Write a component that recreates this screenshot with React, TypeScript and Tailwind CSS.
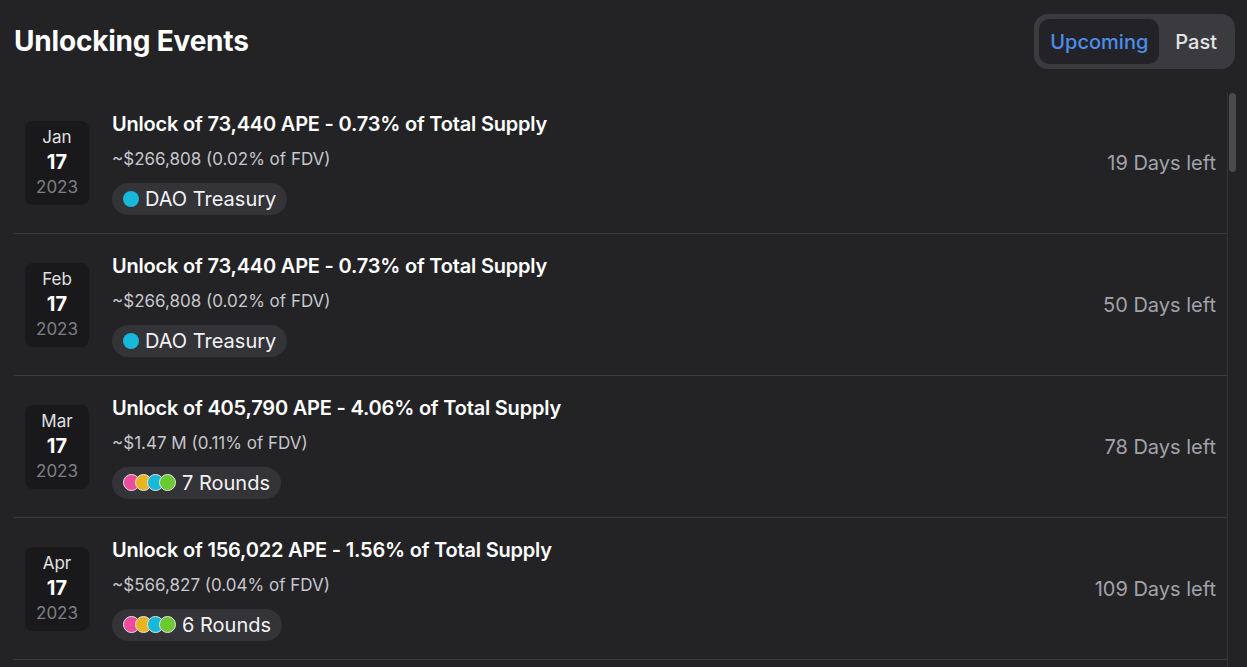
import React from 'react';

interface UnlockEvent {
  month: string;
  day: string;
  year: string;
  amount: string;
  pct: string;
  value: string;
  label: string;
  rounds: boolean;
  daysLeft: number;
}

const events: UnlockEvent[] = [
  { month: 'Jan', day: '17', year: '2023', amount: '73,440', pct: '0.73%', value: '~$266,808 (0.02% of FDV)', label: 'DAO Treasury', rounds: false, daysLeft: 19 },
  { month: 'Feb', day: '17', year: '2023', amount: '73,440', pct: '0.73%', value: '~$266,808 (0.02% of FDV)', label: 'DAO Treasury', rounds: false, daysLeft: 50 },
  { month: 'Mar', day: '17', year: '2023', amount: '405,790', pct: '4.06%', value: '~$1.47 M (0.11% of FDV)', label: '7 Rounds', rounds: true, daysLeft: 78 },
  { month: 'Apr', day: '17', year: '2023', amount: '156,022', pct: '1.56%', value: '~$566,827 (0.04% of FDV)', label: '6 Rounds', rounds: true, daysLeft: 109 },
];

const roundColors = ['bg-[#ec4c9c]', 'bg-[#eab320]', 'bg-[#17b8d8]', 'bg-[#6cc932]'];

function RoundDots() {
  return (
    <div className="flex">
      {roundColors.map((c, i) => (
        <span
          key={c}
          className={`w-[17px] h-[17px] rounded-full border border-[#e6e6ea] ${c} ${i > 0 ? '-ml-[5px]' : ''}`}
        />
      ))}
    </div>
  );
}

export default function App() {
  return (
    <div
      className="w-[1247px] h-[667px] overflow-hidden bg-[#232326] text-white"
      style={{ fontFamily: 'Inter, "Noto Sans", sans-serif' }}
    >
      <div className="h-[92px] flex items-start justify-between pl-[14px] pr-[12px]">
        <h1 className="mt-[23px] text-[28px] leading-[36px] font-bold tracking-[-0.2px]">Unlocking Events</h1>
        <div className="mt-[14px] flex items-center h-[55px] p-[5px] rounded-[14px] bg-[#3a3a3f]">
          <button type="button" className="h-[45px] px-[11px] rounded-[10px] bg-[#232327] text-[20px] font-medium text-[#4a8eea]">
            Upcoming
          </button>
          <button type="button" className="h-[45px] pl-[16px] pr-[13px] text-[20px] font-medium text-[#e4e4e8]">
            Past
          </button>
        </div>
      </div>

      <div className="flex pl-[14px] pr-[10px]">
        <div className="flex-1">
          {events.map((e, i) => (
            <div key={i} className="h-[142px] flex items-center border-b border-[#3b3b40]">
              <div className="ml-[11px] w-[64px] h-[84px] rounded-[8px] bg-[#19191b] flex flex-col items-center justify-center">
                <span className="text-[17px] leading-[25px] text-[#e0e0e4]">{e.month}</span>
                <span className="text-[20px] leading-[25px] font-bold">{e.day}</span>
                <span className="text-[17px] leading-[25px] text-[#7e7e84]">{e.year}</span>
              </div>
              <div className="ml-[23px] flex-1 flex flex-col items-start">
                <div className="text-[20px] leading-[26px] font-semibold tracking-[-0.2px]">
                  Unlock of {e.amount} APE - {e.pct} of Total Supply
                </div>
                <div className="mt-[11px] text-[17px] leading-[22px] text-[#c6c6cc]">{e.value}</div>
                <div className="mt-[13px] h-[32px] flex items-center gap-[6px] pl-[11px] pr-[11px] rounded-full bg-[#333338]">
                  {e.rounds ? <RoundDots /> : <span className="w-[16px] h-[16px] rounded-full bg-[#17b8d8]" />}
                  <span className="text-[20px] leading-none text-[#f2f2f5]">{e.label}</span>
                </div>
              </div>
              <div className="pr-[11px] text-[20px] text-[#a2a2a8]">{e.daysLeft} Days left</div>
            </div>
          ))}
        </div>
        <div className="w-[10px] h-[575px] border-l border-[#333337] flex justify-center">
          <div className="mt-[1px] w-[7px] h-[79px] rounded-full bg-[#4a4a4f]" />
        </div>
      </div>
    </div>
  );
}
